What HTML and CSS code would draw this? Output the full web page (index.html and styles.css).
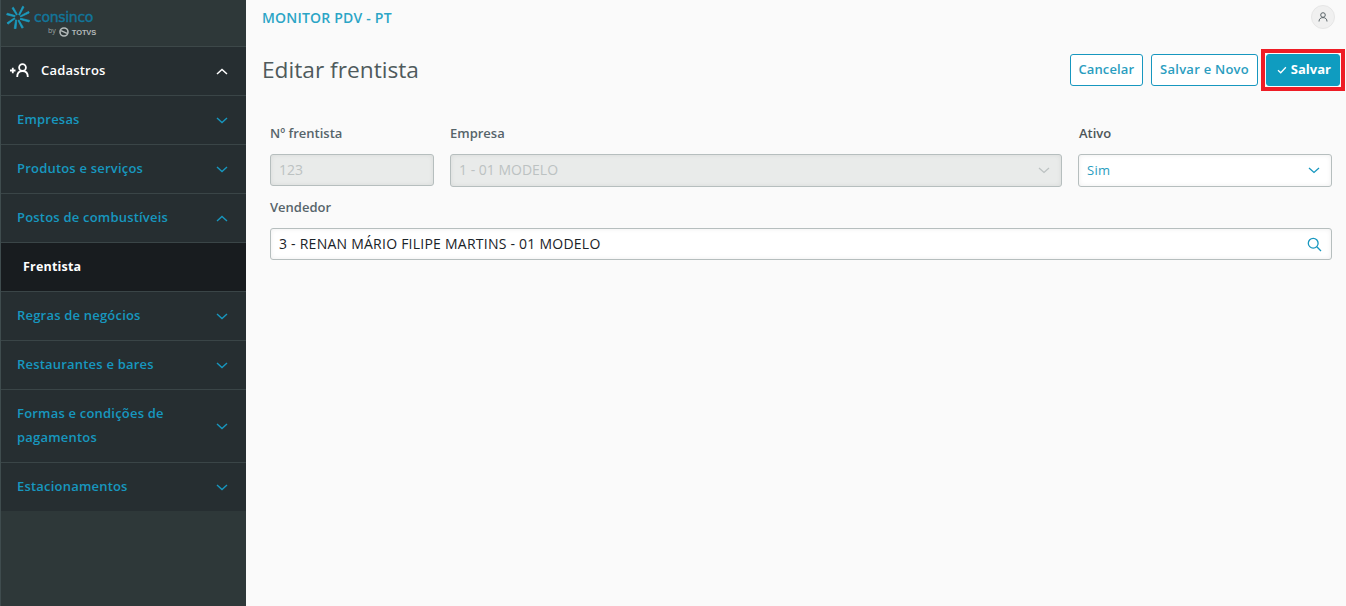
FILE: index.html
```html
<!DOCTYPE html>
<html lang="pt">
<head>
<meta charset="utf-8">
<title>Editar frentista</title>
<link rel="stylesheet" href="styles.css">
</head>
<body>
<div class="app">
  <aside class="sidebar">
    <div class="brand">
      <div class="brand-top">
        <svg class="burst" width="24" height="24" viewBox="0 0 24 24" fill="#1b9cc0" stroke="#1b9cc0" stroke-width="0.7">
          <path d="M12.6 9.6L16.6 1.2L18 2L13.6 10.2ZM14.2 11L22.6 6.4L23.2 8L14.6 12ZM14.6 13.2L23.6 15.4L23 17L14 14.4ZM13 15L17.4 22.4L15.8 23.2L12 15.6ZM10.8 15.2L10 23.8L8.2 23.4L9.6 14.8ZM9 13.8L2 19.2L1 17.8L8.4 12.8ZM8.8 11.8L0.6 9.8L1.2 8.2L9.2 10.6ZM10.4 10L6 3.2L7.4 2.2L11.4 9.4Z"/>
        </svg>
        <span class="brand-name">consinco</span>
      </div>
      <div class="brand-sub">
        <span class="by">by</span>
        <svg width="10" height="10" viewBox="0 0 10 10" fill="none" stroke="#b4baba" stroke-width="1.6"><circle cx="5" cy="5" r="4"/><path d="M2 3.6 L8 6.4"/></svg>
        <span class="totvs">TOTVS</span>
      </div>
    </div>
    <nav class="menu">
      <div class="row row-main">
        <span class="row-main-left">
          <svg width="21" height="16" viewBox="0 0 21 16" fill="none" stroke="#fff" stroke-width="1.8"><path d="M1 8.5H6.5M3.8 5.8V11.2"/><circle cx="13.5" cy="5.5" r="3.4"/><path d="M8.2 15C8.2 11 10 9 13.5 9S18.8 11 18.8 15"/></svg>
          Cadastros
        </span>
        <svg class="chev" width="12" height="7" viewBox="0 0 12 7" fill="none" stroke="#fff" stroke-width="1.5"><path d="M1 6L6 1.5L11 6"/></svg>
      </div>
      <div class="row"><span>Empresas</span><svg class="chev" width="12" height="7" viewBox="0 0 12 7" fill="none" stroke="#1797bf" stroke-width="1.4"><path d="M1 1L6 5.5L11 1"/></svg></div>
      <div class="row"><span>Produtos e serviços</span><svg class="chev" width="12" height="7" viewBox="0 0 12 7" fill="none" stroke="#1797bf" stroke-width="1.4"><path d="M1 1L6 5.5L11 1"/></svg></div>
      <div class="row"><span>Postos de combustíveis</span><svg class="chev" width="12" height="7" viewBox="0 0 12 7" fill="none" stroke="#1797bf" stroke-width="1.4"><path d="M1 6L6 1.5L11 6"/></svg></div>
      <div class="row row-sub"><span>Frentista</span></div>
      <div class="row"><span>Regras de negócios</span><svg class="chev" width="12" height="7" viewBox="0 0 12 7" fill="none" stroke="#1797bf" stroke-width="1.4"><path d="M1 1L6 5.5L11 1"/></svg></div>
      <div class="row"><span>Restaurantes e bares</span><svg class="chev" width="12" height="7" viewBox="0 0 12 7" fill="none" stroke="#1797bf" stroke-width="1.4"><path d="M1 1L6 5.5L11 1"/></svg></div>
      <div class="row row-tall"><span>Formas e condições de<br>pagamentos</span><svg class="chev" width="12" height="7" viewBox="0 0 12 7" fill="none" stroke="#1797bf" stroke-width="1.4"><path d="M1 1L6 5.5L11 1"/></svg></div>
      <div class="row row-last"><span>Estacionamentos</span><svg class="chev" width="12" height="7" viewBox="0 0 12 7" fill="none" stroke="#1797bf" stroke-width="1.4"><path d="M1 1L6 5.5L11 1"/></svg></div>
    </nav>
  </aside>
  <main class="content">
    <header class="topbar">
      <span class="app-title">MONITOR PDV - PT</span>
      <span class="avatar">
        <svg width="10" height="10" viewBox="0 0 10 10" fill="none" stroke="#5a6468" stroke-width="1"><circle cx="5" cy="3" r="2.3"/><path d="M1 9.5C1 7 2.6 5.6 5 5.6S9 7 9 9.5"/></svg>
      </span>
    </header>
    <section class="page-head">
      <h1>Editar frentista</h1>
      <div class="actions">
        <button class="btn btn-cancel">Cancelar</button>
        <button class="btn btn-new">Salvar e Novo</button>
        <span class="highlight">
          <button class="btn btn-primary">
            <svg width="10" height="8" viewBox="0 0 10 8" fill="none" stroke="#fff" stroke-width="1.3"><path d="M1 4.2L3.8 6.8L9 1.2"/></svg>
            Salvar
          </button>
        </span>
      </div>
    </section>
    <form class="form">
      <div class="form-row">
        <div class="field f-num">
          <label>Nº frentista</label>
          <div class="input disabled short"><span>123</span></div>
        </div>
        <div class="field f-emp">
          <label>Empresa</label>
          <div class="input disabled"><span>1 - 01 MODELO</span>
            <svg width="12" height="7" viewBox="0 0 12 7" fill="none" stroke="#bcc2c2" stroke-width="1.3"><path d="M1 1L6 5.5L11 1"/></svg>
          </div>
        </div>
        <div class="field f-ativo">
          <label class="dark">Ativo</label>
          <div class="input select"><span>Sim</span>
            <svg width="12" height="7" viewBox="0 0 12 7" fill="none" stroke="#1797bf" stroke-width="1.3"><path d="M1 1L6 5.5L11 1"/></svg>
          </div>
        </div>
      </div>
      <div class="field field-seller">
        <label>Vendedor</label>
        <div class="input filled short"><span>3 - RENAN MÁRIO FILIPE MARTINS - 01 MODELO</span>
          <svg width="15" height="15" viewBox="0 0 15 15" fill="none" stroke="#1797bf" stroke-width="1.3"><circle cx="6.2" cy="6.2" r="4.9"/><path d="M9.8 9.8L14 14"/></svg>
        </div>
      </div>
    </form>
  </main>
</div>
</body>
</html>
```
FILE: styles.css
```css
* { box-sizing: border-box; }
html, body { margin: 0; height: 100%; }
body {
  font-family: "Open Sans", "Noto Sans", "Liberation Sans", sans-serif;
  background: #fafafa;
  overflow: hidden;
}
.app { display: flex; height: 606px; }

.sidebar {
  width: 246px;
  flex: none;
  background: #2e3839;
  border-left: 1px solid #3f4c4e;
}
.brand {
  height: 47px;
  border-bottom: 1px solid #3d4849;
  padding: 5px 0 0 5px;
}
.brand-top { display: flex; align-items: center; gap: 4px; height: 24px; }
.brand-name {
  font-family: "DejaVu Sans", sans-serif;
  font-size: 14px;
  line-height: 18px;
  color: #12769b;
  letter-spacing: -0.3px;
  -webkit-text-stroke: 0.4px #12769b;
}
.brand-sub {
  display: flex;
  align-items: center;
  margin: -2px 0 0 42px;
  gap: 3px;
  height: 10px;
}
.by { font-size: 7px; color: #9ea5a5; line-height: 10px; position: relative; top: -1px; }
.totvs { font-family: "Liberation Sans", sans-serif; font-weight: 700; font-size: 7.5px; color: #b4baba; letter-spacing: -0.1px; }

.menu { background: #262e31; }
.row {
  display: flex;
  align-items: center;
  justify-content: space-between;
  height: 49px;
  padding: 0 18px 0 16px;
  border-bottom: 1px solid #3a4547;
  color: #1797bf;
  font-size: 13px;
  font-weight: 600;
  letter-spacing: 0.2px;
}
.row > span { position: relative; top: -1px; }
.row-main {
  color: #fff;
  padding-left: 8px;
}
.row-main-left { display: flex; align-items: center; gap: 11px; }
.row-sub {
  background: #181c1f;
  color: #fff;
  padding-left: 22px;
  font-weight: 700;
  font-size: 12.5px;
}
.row-tall { height: 73px; line-height: 24px; }
.row-last { border-bottom: 0; height: 48px; }
.chev { flex: none; }

.content { flex: 1; min-width: 0; padding: 0 14px 0 16px; }
.topbar {
  display: flex;
  align-items: center;
  justify-content: space-between;
  height: 34px;
  color: #2ba5c6;
  font-size: 14px;
  font-weight: 600;
  letter-spacing: 0.2px;
}
.avatar {
  width: 24px;
  height: 24px;
  margin-right: -3px;
  border-radius: 50%;
  background: #f0f0f0;
  border: 1px solid #e6e6e6;
  display: flex;
  align-items: center;
  justify-content: center;
}
.page-head {
  display: flex;
  align-items: center;
  justify-content: space-between;
  height: 72px;
}
.page-head h1 {
  margin: 0 0 2px;
  font-size: 22.7px;
  font-weight: 400;
  color: #4f5a5c;
}
.actions { display: flex; align-items: center; gap: 8px; margin-right: -13px; }
.btn {
  height: 32px;
  padding: 0 8px 2px;
  border: 1px solid #1797bf;
  border-radius: 3px;
  background: #fff;
  color: #2a9dc0;
  font: 600 13px "Open Sans", "Noto Sans", sans-serif;
  display: flex;
  align-items: center;
  gap: 4px;
}
.btn-cancel { letter-spacing: 0.1px; }
.btn-new { letter-spacing: 0.25px; }
.btn-primary {
  background: #0f9cc0;
  color: #fff;
  font-weight: 700;
  border-color: #0f9cc0;
  padding: 0 8px 2px 10px;
  width: 74px;
}
.btn-primary svg { position: relative; top: 1px; }
.highlight {
  border: 4px solid #ee1c25;
  display: block;
  padding: 1px;
  margin-left: -5px;
}
.form { padding: 18px 0 0 8px; }
.form-row { display: flex; gap: 16px; }
.field { display: flex; flex-direction: column; }
.f-num { width: 164px; }
.f-emp { width: 612px; }
.f-ativo { width: 254px; }
.field label {
  display: block;
  font-size: 13px;
  font-weight: 600;
  line-height: 18px;
  color: #56646a;
  margin-bottom: 12px;
}
.field label.dark { color: #4d5558; padding-left: 1px; }
.field-seller { margin-top: 11px; }
.input {
  height: 33px;
  display: flex;
  align-items: center;
  justify-content: space-between;
  padding: 0 11px 0 8px;
  border: 1px solid #b6bebe;
  border-radius: 3px;
  background: #fff;
  box-shadow: inset 0 0 5px rgba(0,0,0,.07);
  font-size: 14px;
}
.input > span { position: relative; top: -1px; }
.input.short { height: 32px; }
.disabled {
  background: #e9ebea;
  color: #bcc2c2;
}
.select { color: #2a9dc0; }
.select > span { font-size: 13px; letter-spacing: .3px; }
.filled { color: #1a2328; padding-right: 9px; }
.filled > span { letter-spacing: 0.24px; }
```
